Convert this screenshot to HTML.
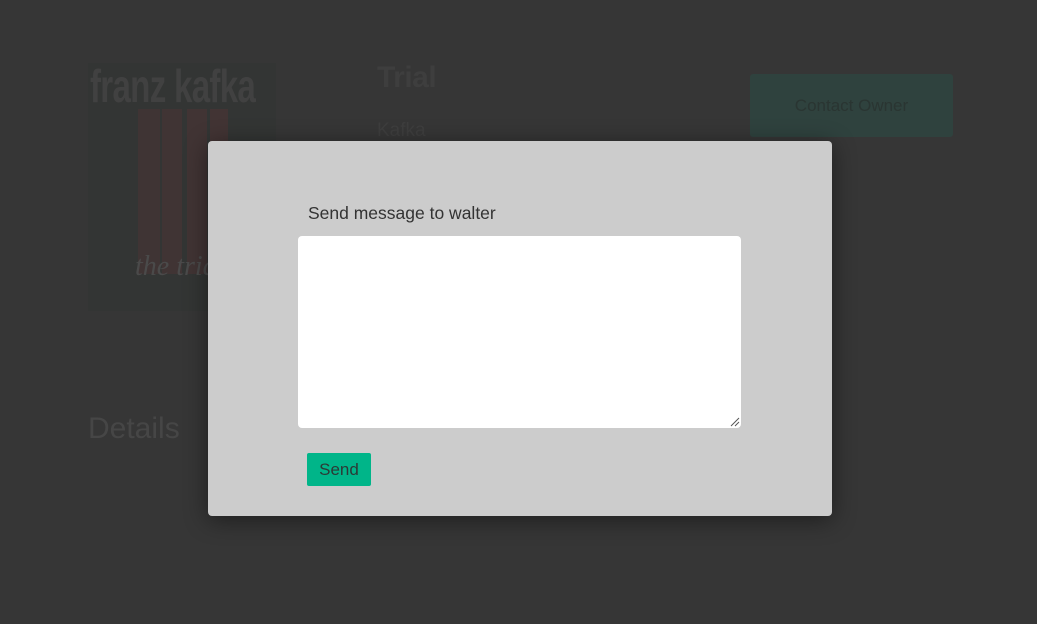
<!DOCTYPE html>
<html><head><style>
html,body{margin:0;padding:0;width:1037px;height:624px;overflow:hidden;background:#363636;font-family:"Liberation Sans",sans-serif;}
.abs{position:absolute;}
</style></head><body>
<div class="abs" style="left:88px;top:63px;width:188px;height:248px;background:#333534;">
  <div class="abs" style="left:2px;top:-4px;font-size:46px;font-weight:bold;color:#414141;font-family:'Liberation Sans Narrow','Liberation Sans',sans-serif;letter-spacing:-1px;transform:scaleX(0.72);transform-origin:left;white-space:nowrap;">franz kafka</div>
  <div class="abs" style="left:50px;top:46px;width:22px;height:165px;background:#3f3434;"></div>
  <div class="abs" style="left:74px;top:46px;width:20px;height:165px;background:#403434;"></div>
  <div class="abs" style="left:99px;top:46px;width:20px;height:165px;background:#413434;"></div>
  <div class="abs" style="left:122px;top:46px;width:18px;height:165px;background:#423434;"></div>
  <div class="abs" style="left:47px;top:188px;font-size:28px;font-style:italic;color:#4a4a4a;font-family:'Liberation Serif',serif;">the trial</div>
</div>
<div class="abs" style="left:377px;top:61px;font-size:30px;font-weight:bold;color:#3e3e3e;letter-spacing:-0.5px;">Trial</div>
<div class="abs" style="left:377px;top:120px;font-size:19px;color:#3e3e3e;">Kafka</div>
<div class="abs" style="left:750px;top:74px;width:203px;height:63px;background:#2f423e;border-radius:3px;color:#2a3532;font-size:17px;text-align:center;line-height:63px;">Contact Owner</div>
<div class="abs" style="left:88px;top:412px;font-size:30px;color:#464646;">Details</div>
<div class="abs" style="left:208px;top:141px;width:624px;height:375px;background:#cccccc;border-radius:4px;box-shadow:0 4px 24px rgba(0,0,0,0.45);">
  <div class="abs" style="left:100px;top:62px;font-size:17.5px;color:#333;">Send message to walter</div>
  <div class="abs" style="left:90px;top:95px;width:443px;height:192px;background:#fff;border-radius:4px;"></div>
  <svg class="abs" style="left:522px;top:276px" width="10" height="10"><path d="M1 9L9 1M5 9L9 5" stroke="#555" stroke-width="1"/></svg>
  <div class="abs" style="left:99px;top:312px;width:64px;height:33px;background:#00b589;border-radius:2px;color:#2b3a36;font-size:17px;text-align:center;line-height:33px;">Send</div>
</div>
</body></html>
